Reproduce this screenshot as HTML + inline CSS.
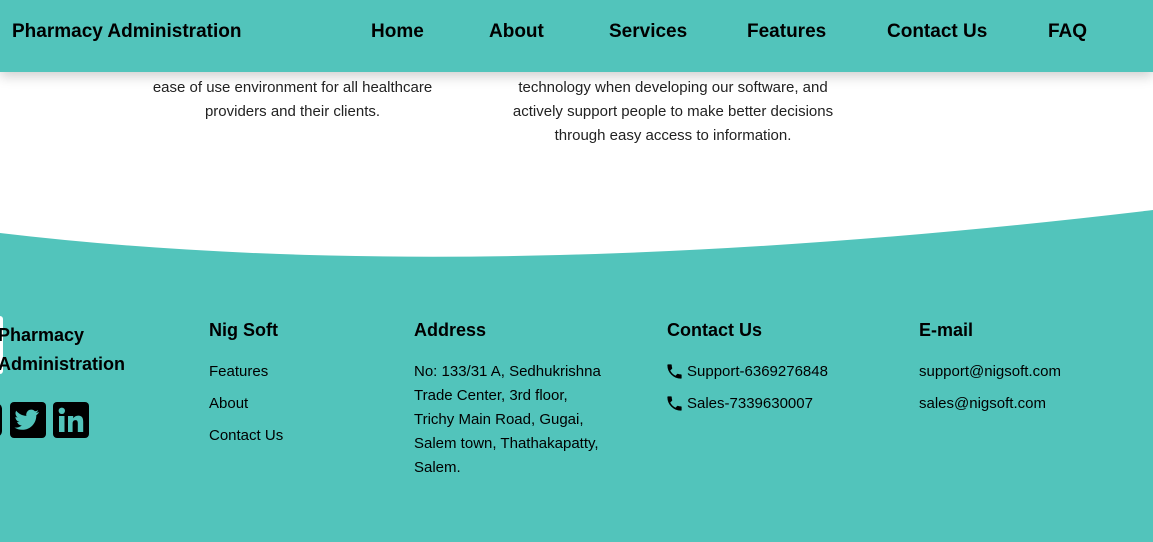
<!DOCTYPE html>
<html><head><meta charset="utf-8"><style>
*{margin:0;padding:0;box-sizing:border-box}
body{width:1153px;height:542px;overflow:hidden;background:#fff;font-family:"Liberation Sans",sans-serif;color:#111;position:relative}
.hdr{position:absolute;left:0;top:0;width:1153px;height:72px;background:#52c4bb;box-shadow:0 4px 12px rgba(0,0,0,.2);z-index:5}
.hdr span{position:absolute;top:21px;font-weight:bold;font-size:19px;color:#000}
.t{position:absolute;font-size:15px;line-height:24px;text-align:center;color:#222}
.ft{position:absolute;left:0;top:200px;width:1153px;height:342px}
.a{position:absolute;font-size:15px;color:#000;line-height:24px}
.h{position:absolute;font-weight:bold;font-size:18px;color:#000}
</style></head><body>
<div class="hdr">
<span style="left:12px">Pharmacy Administration</span>
<span style="left:371px">Home</span>
<span style="left:489px">About</span>
<span style="left:609px">Services</span>
<span style="left:747px">Features</span>
<span style="left:887px">Contact Us</span>
<span style="left:1048px">FAQ</span>
</div>
<div class="t" style="left:130px;width:325px;top:76px">ease of use environment for all healthcare<br>providers and their clients.</div>
<div class="t" style="left:488px;width:370px;top:76px">technology when developing our software, and<br>actively support people to make better decisions<br>through easy access to information.</div>
<svg class="ft" width="1153" height="342" viewBox="0 0 1153 342"><path d="M0 33 Q480 90 1153 10 L1153 342 L0 342Z" fill="#52c4bb"/></svg>
<div style="position:absolute;left:-4px;top:316px;width:7px;height:58px;background:#fff;border-radius:3px"></div>
<div class="h" style="left:-2px;top:321px;line-height:29px">Pharmacy<br>Administration</div>
<div style="position:absolute;left:-10px;top:403px;width:12px;height:34px;background:#000;border-radius:6px"></div>
<svg style="position:absolute;left:10px;top:402px" width="36" height="36" viewBox="0 0 36 36"><rect width="36" height="36" rx="4" fill="#000"/><path d="M29 10c-1 .5-2 .7-3 .8 1-.6 1.8-1.6 2.2-2.7-1 .6-2 1-3.2 1.2a5 5 0 0 0-8.6 4.6C12.2 13.7 8.6 11.8 6.2 8.8c-1.4 2.3-.6 5.2 1.5 6.7-.8 0-1.6-.3-2.3-.6 0 2.4 1.7 4.5 4 5-.7.2-1.5.2-2.3.1.7 2 2.6 3.4 4.7 3.5-2 1.6-4.6 2.4-7.3 2.1 2.2 1.4 4.9 2.2 7.6 2.2 9.3 0 14.4-7.7 14.2-14.6 1-.7 1.8-1.6 2.5-2.6z" fill="#52c4bb"/></svg>
<svg style="position:absolute;left:53px;top:402px" width="36" height="36" viewBox="0 0 36 36"><rect width="36" height="36" rx="4" fill="#000"/><rect x="6" y="14" width="5.5" height="16" fill="#52c4bb"/><circle cx="8.8" cy="8.8" r="3.2" fill="#52c4bb"/><path d="M15 14h5.2v2.3c1-1.6 2.7-2.7 5-2.7 4 0 5 2.6 5 6.3V30h-5.4v-8.5c0-2-.4-3.4-2.3-3.4-2 0-2.9 1.4-2.9 3.4V30H15z" fill="#52c4bb"/></svg>
<div class="h" style="left:209px;top:320px">Nig Soft</div>
<div class="a" style="left:209px;top:360px">Features</div>
<div class="a" style="left:209px;top:392px">About</div>
<div class="a" style="left:209px;top:424px">Contact Us</div>
<div class="h" style="left:414px;top:320px">Address</div>
<div class="a" style="left:414px;top:360px;width:210px">No: 133/31 A, Sedhukrishna<br>Trade Center, 3rd floor,<br>Trichy Main Road, Gugai,<br>Salem town, Thathakapatty,<br>Salem.</div>
<div class="h" style="left:667px;top:320px">Contact Us</div>
<svg style="position:absolute;left:665px;top:362px" width="19" height="19" viewBox="0 0 24 24"><path d="M6.6 10.8a15 15 0 0 0 6.6 6.6l2.2-2.2c.3-.3.7-.4 1-.2 1.1.4 2.3.6 3.6.6.6 0 1 .4 1 1V20c0 .6-.4 1-1 1A17 17 0 0 1 3 4c0-.6.4-1 1-1h3.5c.6 0 1 .4 1 1 0 1.3.2 2.5.6 3.6.1.3 0 .7-.2 1z" fill="#000"/></svg>
<div class="a" style="left:687px;top:360px">Support-6369276848</div>
<svg style="position:absolute;left:665px;top:394px" width="19" height="19" viewBox="0 0 24 24"><path d="M6.6 10.8a15 15 0 0 0 6.6 6.6l2.2-2.2c.3-.3.7-.4 1-.2 1.1.4 2.3.6 3.6.6.6 0 1 .4 1 1V20c0 .6-.4 1-1 1A17 17 0 0 1 3 4c0-.6.4-1 1-1h3.5c.6 0 1 .4 1 1 0 1.3.2 2.5.6 3.6.1.3 0 .7-.2 1z" fill="#000"/></svg>
<div class="a" style="left:687px;top:392px">Sales-7339630007</div>
<div class="h" style="left:919px;top:320px">E-mail</div>
<div class="a" style="left:919px;top:360px">support@nigsoft.com</div>
<div class="a" style="left:919px;top:392px">sales@nigsoft.com</div>
</body></html>
